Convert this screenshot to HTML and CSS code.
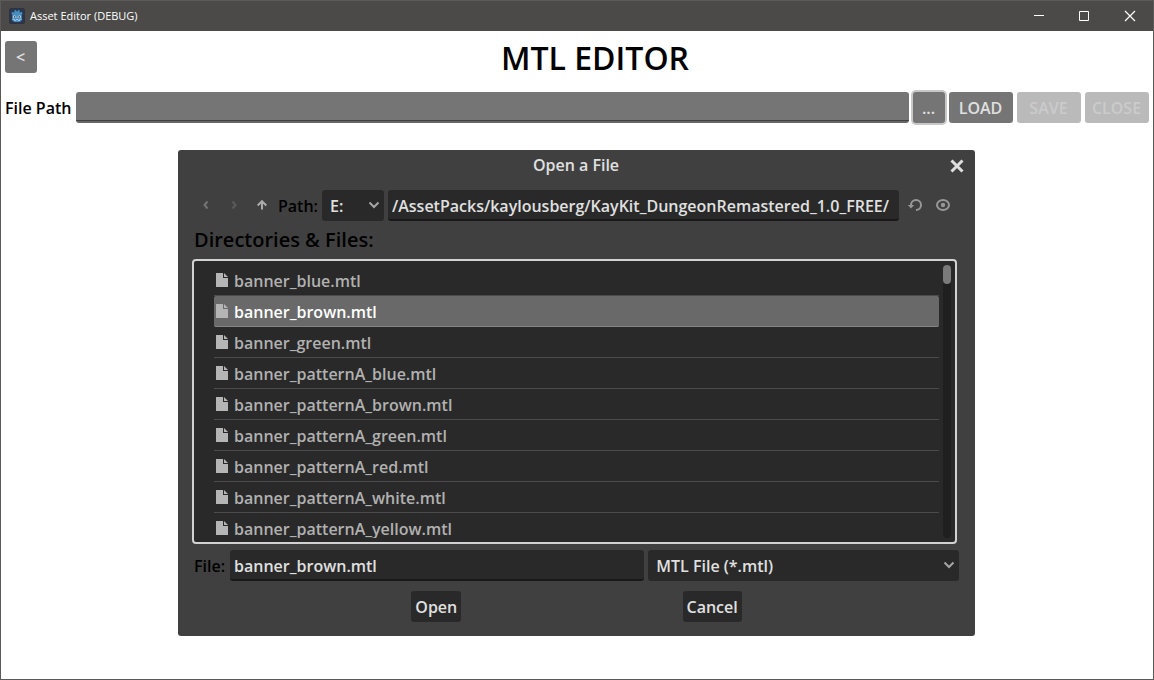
FILE: index.html
```html
<!DOCTYPE html>
<html lang="en">
<head>
<meta charset="utf-8">
<title>Asset Editor (DEBUG)</title>
<link rel="stylesheet" href="styles.css">
</head>
<body>
<div class="window">
  <header class="titlebar">
    <svg class="app-icon" width="16" height="16" viewBox="0 0 16 16" aria-hidden="true">
      <rect x=".5" y=".5" width="15" height="15" rx="1.5" fill="#29374f" stroke="#30333f"/>
      <path d="M2.3 5.2 3.6 3.8l1.2.7.6-.3-.1-1.700 1.500-.6.7 1.400h1l.7-1.400 1.500.6-.1 1.700.6.3 1.200-.7 1.300 1.400-.9 1.400v5.100c0 1.400-2 2.300-4.800 2.300s-4.800-.9-4.800-2.300V6.600z" fill="#478cbf"/>
      <circle cx="5.4" cy="8.800" r="1.400" fill="#dcecf5"/><circle cx="10.600" cy="8.800" r="1.400" fill="#dcecf5"/>
      <circle cx="5.600" cy="8.900" r=".8" fill="#34485c"/><circle cx="10.400" cy="8.900" r=".8" fill="#34485c"/>
      <path d="M8 8.500v1.400M3.300 11.200l2 .2.200 1h1.400l.2-.9h1.800l.2.9h1.400l.2-1 2-.2" fill="none" stroke="#dcecf5" stroke-width=".6"/>
    </svg>
    <span class="caption">Asset Editor (DEBUG)</span>
    <button class="win-btn" aria-label="Minimize"><svg width="12" height="12" viewBox="0 0 12 12"><path d="M2 5.500h10" stroke="#fff"/></svg></button>
    <button class="win-btn" aria-label="Maximize"><svg width="12" height="12" viewBox="0 0 12 12"><path d="M1.500 1.500h9v9h-9z" fill="none" stroke="#fff"/></svg></button>
    <button class="win-btn" aria-label="Close window"><svg width="12" height="12" viewBox="0 0 12 12"><path d="M1 1l10 10M11 1 1 11" stroke="#fff" stroke-width="1.200"/></svg></button>
  </header>

  <main class="editor">
    <div class="heading">
      <button class="btn btn-back">&lt;</button>
      <h1>MTL EDITOR</h1>
    </div>
    <div class="path-row">
      <label for="file-path">File Path</label>
      <input class="main-field" id="file-path" type="text">
      <button class="btn btn-browse">...</button>
      <button class="btn">LOAD</button>
      <button class="btn" disabled>SAVE</button>
      <button class="btn" disabled>CLOSE</button>
    </div>

    <section class="dialog" role="dialog" aria-labelledby="dialog-title">
      <div class="dialog-head">
        <h2 id="dialog-title">Open a File</h2>
        <button class="icon-btn dialog-close" aria-label="Close dialog"><svg width="16" height="16" viewBox="0 0 16 16"><path d="M2.500 2.500l11 11M13.500 2.500l-11 11" stroke="#dedede" stroke-width="3"/></svg></button>
      </div>
      <div class="toolbar">
        <button class="icon-btn" aria-label="Back"><svg width="16" height="16" viewBox="0 0 16 16"><path d="M9.500 3.500 6.500 7l3 3.500" fill="none" stroke="#737373" stroke-width="2"/></svg></button>
        <button class="icon-btn" aria-label="Forward"><svg width="16" height="16" viewBox="0 0 16 16"><path d="M6.500 3.500 9.500 7l-3 3.500" fill="none" stroke="#5a5a5a" stroke-width="2"/></svg></button>
        <button class="icon-btn" aria-label="Up"><svg width="16" height="16" viewBox="0 0 16 16"><path d="M8 11.500V3.500M3.700 7.500 8 3.200l4.300 4.300" fill="none" stroke="#aaa" stroke-width="2"/></svg></button>
        <label for="dir-path">Path:</label>
        <span class="select drive">
          <select aria-label="Drive"><option>E:</option></select>
          <svg width="12" height="12" viewBox="0 0 12 12"><path d="M1.500 3.500 6 8l4.500-4.500" fill="none" stroke="#a5a5a5" stroke-width="2"/></svg>
        </span>
        <input class="field" id="dir-path" type="text" value="/AssetPacks/kaylousberg/KayKit_DungeonRemastered_1.0_FREE/">
        <button class="icon-btn" aria-label="Refresh"><svg width="16" height="16" viewBox="0 0 16 16"><path d="M4 8V7a5 5 0 1 1 5 5" fill="none" stroke="#979797" stroke-width="2"/><path d="M.8 7h6.400L4 10.500z" fill="#979797"/></svg></button>
        <button class="icon-btn" aria-label="Toggle hidden files"><svg width="16" height="16" viewBox="0 0 16 16"><ellipse cx="8" cy="7" rx="6" ry="5" fill="none" stroke="#979797" stroke-width="2"/><circle cx="8" cy="7" r="2.200" fill="#979797"/></svg></button>
      </div>
      <h3 id="list-title">Directories &amp; Files:</h3>
      <div class="list-box">
        <ul class="files" aria-labelledby="list-title">
          <li><button><svg class="doc" viewBox="0 0 12 14"><path d="M0 0h7v5h5v9H0zM8 0l4 4H8z"/></svg><span>banner_blue.mtl</span></button></li>
          <li><button class="selected" aria-pressed="true"><svg class="doc" viewBox="0 0 12 14"><path d="M0 0h7v5h5v9H0zM8 0l4 4H8z"/></svg><span>banner_brown.mtl</span></button></li>
          <li><button><svg class="doc" viewBox="0 0 12 14"><path d="M0 0h7v5h5v9H0zM8 0l4 4H8z"/></svg><span>banner_green.mtl</span></button></li>
          <li><button><svg class="doc" viewBox="0 0 12 14"><path d="M0 0h7v5h5v9H0zM8 0l4 4H8z"/></svg><span>banner_patternA_blue.mtl</span></button></li>
          <li><button><svg class="doc" viewBox="0 0 12 14"><path d="M0 0h7v5h5v9H0zM8 0l4 4H8z"/></svg><span>banner_patternA_brown.mtl</span></button></li>
          <li><button><svg class="doc" viewBox="0 0 12 14"><path d="M0 0h7v5h5v9H0zM8 0l4 4H8z"/></svg><span>banner_patternA_green.mtl</span></button></li>
          <li><button><svg class="doc" viewBox="0 0 12 14"><path d="M0 0h7v5h5v9H0zM8 0l4 4H8z"/></svg><span>banner_patternA_red.mtl</span></button></li>
          <li><button><svg class="doc" viewBox="0 0 12 14"><path d="M0 0h7v5h5v9H0zM8 0l4 4H8z"/></svg><span>banner_patternA_white.mtl</span></button></li>
          <li><button><svg class="doc" viewBox="0 0 12 14"><path d="M0 0h7v5h5v9H0zM8 0l4 4H8z"/></svg><span>banner_patternA_yellow.mtl</span></button></li>
        </ul>
        <div class="scrollbar"><div class="thumb"></div></div>
      </div>
      <div class="file-row">
        <label for="file-name">File:</label>
        <input class="field" id="file-name" type="text" value="banner_brown.mtl">
        <span class="select">
          <select aria-label="File type"><option>MTL File (*.mtl)</option></select>
          <svg width="12" height="12" viewBox="0 0 12 12"><path d="M1.500 3.500 6 8l4.500-4.500" fill="none" stroke="#a5a5a5" stroke-width="2"/></svg>
        </span>
      </div>
      <div class="actions">
        <button class="dlg-btn">Open</button>
        <button class="dlg-btn">Cancel</button>
      </div>
    </section>
  </main>
</div>
</body>
</html>
```
FILE: styles.css
```css
* { box-sizing: border-box; }

body {
  margin: 0;
  font: 600 16px/23px "Open Sans", "Noto Sans", sans-serif;
  color: #000;
  background: #fff;
}

button, input, select {
  font: inherit;
  margin: 0;
  border: 0;
  outline: 0;
}

button { padding: 0; }
svg { display: block; flex: none; }
h1, h2, h3 { margin: 0; font-weight: 600; }
label { padding: 2px 1px 0 0; }

.window {
  display: flex;
  flex-direction: column;
  min-height: 100vh;
  border: 1px solid #5b5a58;
}

.titlebar {
  display: flex;
  align-items: center;
  height: 30px;
  padding-left: 8px;
  background: #4b4a48;
  color: #fff;
}

.caption {
  flex: 1;
  padding-left: 5px;
  font: 400 11px/16px "Open Sans", "Noto Sans", sans-serif;
}

.win-btn {
  display: grid;
  place-items: center;
  width: 46px;
  height: 30px;
  background: none;
}

.editor {
  position: relative;
  flex: 1;
  padding: 4px;
}

.heading {
  display: flex;
  align-items: center;
  gap: 4px;
  height: 44px;
}

h1 {
  flex: 1;
  padding-top: 2px;
  font-size: 32px;
  line-height: 44px;
  text-align: center;
}

.path-row {
  display: flex;
  align-items: center;
  gap: 4px;
  padding-top: 13px;
}

.btn {
  width: 64px;
  height: 31px;
  padding: 2px 1px 0 0;
  border-radius: 3px;
  background: #757575;
  color: #e0e0e0;
}

.btn:disabled { background: #bababa; color: #cbcbcb; }
.btn-back { width: 32px; height: 32px; padding-top: 0; }
.btn-browse { width: 32px; box-shadow: 0 0 0 2px #c8c8c8; }

.main-field {
  flex: 1;
  min-width: 0;
  height: 31px;
  padding: 2px 4px 0;
  border-radius: 3px;
  background: linear-gradient(#757575 28px, #404040 28px, #404040 29px, #666 29px);
  color: #e0e0e0;
}

.dialog {
  position: absolute;
  top: 119px;
  left: 177px;
  right: 178px;
  padding: 0 16px 14px;
  border-radius: 3px;
  background: #404040;
  color: #e0e0e0;
}

.dialog label, h3 { color: #000; }

.dialog-head {
  display: grid;
  grid-template-columns: 1fr auto 1fr;
  align-items: center;
  height: 32px;
}

h2 {
  grid-column: 2;
  padding: 0 1px 2px 0;
  font-size: 16px;
  line-height: 23px;
}

.icon-btn {
  display: grid;
  place-items: center;
  width: 24px;
  height: 24px;
  background: none;
}

.dialog-close { justify-self: end; margin-right: -10px; }

.toolbar {
  display: flex;
  align-items: center;
  gap: 4px;
  padding: 8px 4px 0 0;
}

.toolbar label { padding-right: 0; }

.field {
  flex: 1;
  min-width: 0;
  height: 31px;
  padding: 3px 4px 0;
  border-bottom: 2px solid #191919;
  border-radius: 3px;
  background: #292929;
  color: #e0e0e0;
}

.select { position: relative; }

.select select {
  appearance: none;
  width: 100%;
  height: 31px;
  padding: 2px 24px 0 8px;
  border-radius: 3px;
  background: #292929;
  color: #e0e0e0;
}

.select svg {
  position: absolute;
  top: 9px;
  right: 4px;
  pointer-events: none;
}

.drive { width: 62px; }

h3 {
  padding: 5px 0;
  font-size: 20px;
  line-height: 28px;
}

.list-box {
  display: flex;
  gap: 4px;
  height: 285px;
  margin: 0 2px 6px -2px;
  padding: 4px 4px 4px 20px;
  border: 2px solid #d2d2d2;
  border-radius: 4px;
  background: #292929;
}

.files {
  flex: 1;
  margin: 0;
  padding: 0;
  overflow: hidden;
  list-style: none;
}

.files button {
  display: flex;
  align-items: center;
  gap: 6px;
  width: 100%;
  height: 31px;
  padding-left: 2px;
  border-bottom: 1px solid #4b4b4b;
  background: none;
  color: #b1b1b1;
}

.files span { padding-top: 2px; }

.files .selected {
  border-bottom-color: #858585;
  border-radius: 2px;
  background: #696969;
  color: #fff;
}

.doc {
  width: 12px;
  height: 14px;
  fill: #b5b5b5;
}

.scrollbar {
  width: 8px;
  border-radius: 4px;
  background: #1f1f1f;
}

.thumb {
  height: 19px;
  border-radius: 4px;
  background: #7a7a7a;
}

.file-row {
  display: grid;
  grid-template-columns: auto 4fr 3fr;
  align-items: center;
  gap: 4px;
}

.actions {
  display: flex;
  justify-content: space-evenly;
  gap: 4px;
  padding-top: 10px;
}

.dlg-btn {
  height: 31px;
  padding: 2px 4px 0;
  border-radius: 3px;
  background: #292929;
  color: #e0e0e0;
}
```
